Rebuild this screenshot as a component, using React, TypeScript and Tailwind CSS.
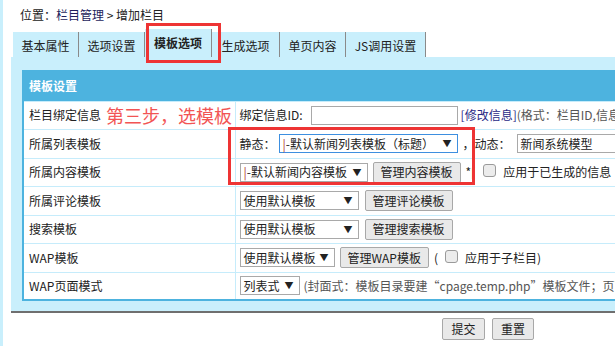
import React from "react";

const tabs = ["基本属性", "选项设置", "模板选项", "生成选项", "单页内容", "JS调用设置"];

const Sel = ({ children, className, focus }: { children: React.ReactNode; className: string; focus?: boolean }) => (
  <span
    className={`shrink-0 inline-flex items-center justify-between h-[19px] bg-white border pl-[3px] pr-[5px] leading-none ${
      focus ? "border-[#3d8fe0]" : "border-[#a9a9a9]"
    } ${className}`}
  >
    <span className="whitespace-nowrap">{children}</span>
    <span className="text-[9px] text-[#222]">▼</span>
  </span>
);

const Btn = ({ children, className = "" }: { children: React.ReactNode; className?: string }) => (
  <span
    className={`shrink-0 inline-flex items-center justify-center h-[21px] px-[7px] bg-[#e9e9e9] border border-[#a8a8a8] rounded-[2px] leading-none whitespace-nowrap ${className}`}
  >
    {children}
  </span>
);

const Check = () => (
  <span className="inline-block w-[13px] h-[13px] border border-[#9a9a9a] rounded-[3px] bg-[#ececec]" />
);

const Row = ({
  label,
  extra,
  h,
  children,
}: {
  label: string;
  extra?: React.ReactNode;
  h: string;
  children: React.ReactNode;
}) => (
  <tr className={h}>
    <td className="border border-[#c6ecfb] pl-[5px] whitespace-nowrap">
      <span className="inline-flex items-center">
        {label}
        {extra}
      </span>
    </td>
    <td className="border border-[#c6ecfb] pl-[4px] whitespace-nowrap overflow-hidden">
      <div className="flex items-center">{children}</div>
    </td>
  </tr>
);

export default function App() {
  return (
    <div className="relative w-[615px] h-[346px] overflow-hidden bg-white border-l-[3px] border-[#c9effc] text-[12px] text-[#222] font-['Noto_Sans_CJK_SC',sans-serif]">
      {/* breadcrumb */}
      <div className="h-[29px] pl-[17px] pt-[7px] leading-[16px]">
        位置：<span className="text-[#1d1d5c]">栏目管理</span> &gt; 增加栏目
      </div>

      {/* tabs */}
      <div className="flex items-end ml-[10px] h-[28px]">
        {tabs.map((t, i) =>
          i === 2 ? (
            <div
              key={t}
              className="h-[28px] w-[67px] flex items-start justify-center pt-[6px] bg-[#c9effc] border-r border-[#8a8a8a] font-bold leading-[16px]"
            >
              {t}
            </div>
          ) : (
            <div
              key={t}
              className={`h-[25px] flex items-center justify-center bg-[#c9effc] border-r border-[#8a8a8a] leading-[16px] pt-[2px] ${
                i === 5 ? "w-[80px]" : i === 3 ? "w-[68px]" : "w-[66px]"
              }`}
            >
              {t}
            </div>
          )
        )}
      </div>

      {/* panel */}
      <div className="ml-[8px] w-[700px] bg-[#c9effc] border-b-2 border-[#6f6f6f] pt-[13px] pl-[11px] pb-[10px]">
        <table className="w-[680px] table-fixed border-collapse border-2 border-[#4db3df] bg-white leading-[16px]">
          <colgroup>
            <col className="w-[212px]" />
            <col />
          </colgroup>
          <tbody>
            <tr className="h-[30px] bg-[#4db3df]">
              <td colSpan={2} className="pl-[5px] text-white font-bold">
                模板设置
              </td>
            </tr>
            <Row
              h="h-[28px]"
              label="栏目绑定信息"
              extra={<span className="ml-[5px] text-[18px] leading-[20px] text-[#f25454]">第三步，选模板</span>}
            >
              <span>绑定信息ID:</span>
              <span className="shrink-0 ml-[8px] inline-block w-[147px] h-[19px] border border-[#a9a9a9] bg-white" />
              <span className="ml-[3px] text-[#2a2a86]">[修改信息]</span>
              <span className="text-[#555]">(格式：栏目ID,信息ID)</span>
            </Row>
            <Row h="h-[29px]" label="所属列表模板">
              <span>静态：</span>
              <Sel focus className="ml-[3px] w-[179px]">
                <span className="text-[#b03030]">|</span>-默认新闻列表模板（标题）
              </Sel>
              <span className="ml-[5px]">，动态：</span>
              <Sel className="ml-[6px] w-[130px]">新闻系统模型</Sel>
            </Row>
            <Row h="h-[28px]" label="所属内容模板">
              <Sel className="w-[128px]">
                <span className="text-[#b03030]">|</span>-默认新闻内容模板
              </Sel>
              <Btn className="ml-[5px]">管理内容模板</Btn>
              <span className="ml-[5px]">*[</span>
              <span className="ml-[8px]">
                <Check />
              </span>
              <span className="ml-[7px]">应用于已生成的信息</span>
            </Row>
            <Row h="h-[29px]" label="所属评论模板">
              <Sel className="w-[119px]">使用默认模板</Sel>
              <Btn className="ml-[6px]">管理评论模板</Btn>
            </Row>
            <Row h="h-[28px]" label="搜索模板">
              <Sel className="w-[119px]">使用默认模板</Sel>
              <Btn className="ml-[6px]">管理搜索模板</Btn>
            </Row>
            <Row h="h-[29px]" label="WAP模板">
              <Sel className="w-[95px]">使用默认模板</Sel>
              <Btn className="ml-[5px]">管理WAP模板</Btn>
              <span className="ml-[5px]">(</span>
              <span className="ml-[7px]">
                <Check />
              </span>
              <span className="ml-[7px]">应用于子栏目)</span>
            </Row>
            <Row h="h-[28px]" label="WAP页面模式">
              <Sel className="w-[60px]">列表式</Sel>
              <span className="ml-[4px] text-[#555]">
                (封面式：模板目录要建“cpage.temp.php”模板文件；页面式：模板目录要建“page.temp.php”)
              </span>
            </Row>
          </tbody>
        </table>
      </div>

      {/* submit */}
      <div className="flex gap-[7px] pl-[439px] pt-[5px]">
        <Btn className="w-[43px] h-[22px]">提交</Btn>
        <Btn className="w-[42px] h-[22px]">重置</Btn>
      </div>

      {/* annotation boxes */}
      <div className="absolute left-[143px] top-[23px] w-[75px] h-[40px] border-[3px] border-[#ee3434]" />
      <div className="absolute left-[225px] top-[127px] w-[247px] h-[58px] border-[3px] border-[#ee3434]" />
    </div>
  );
}
